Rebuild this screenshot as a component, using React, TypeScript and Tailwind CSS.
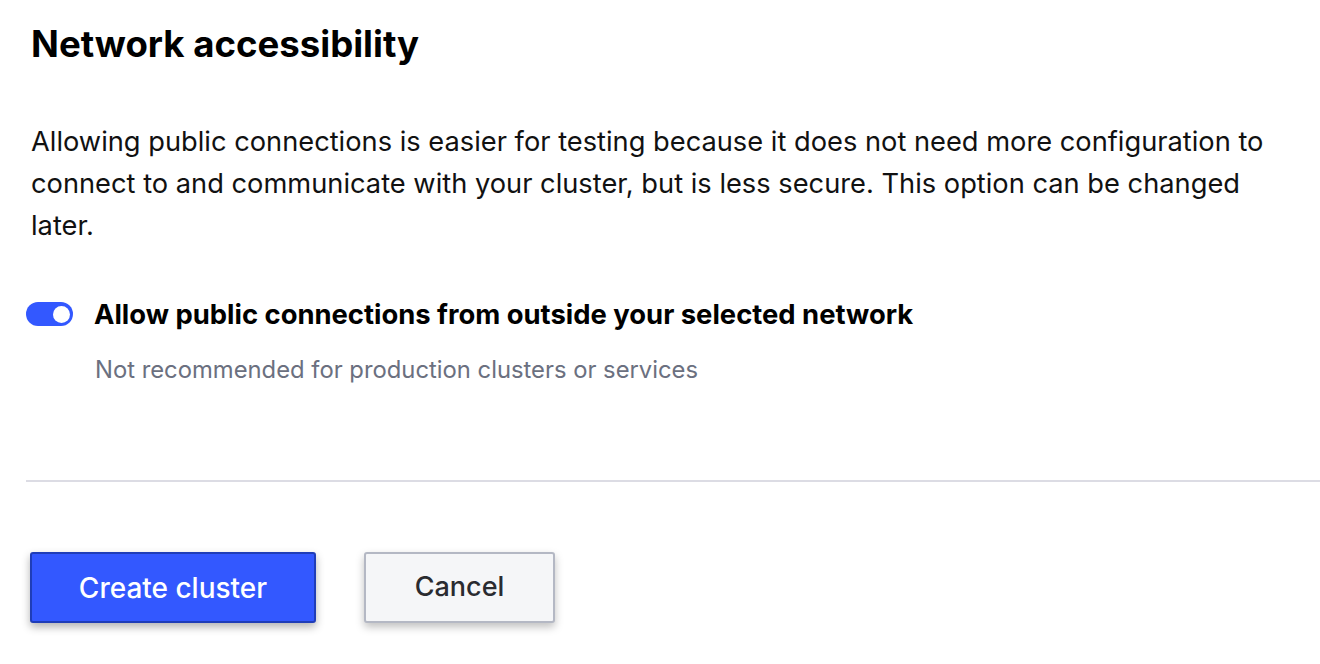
import React from "react";

export default function App() {
  return (
    <div className="w-[1320px] h-[664px] bg-white overflow-hidden" style={{ fontFamily: "Inter, 'Noto Sans', sans-serif" }}>
      <div className="pl-[31px] pt-[22px]">
        <h1 className="text-[36.6px] leading-[44px] font-bold text-black">Network accessibility</h1>
        <p className="mt-[55px] w-[1250px] text-[27.25px] leading-[42px] text-[#111]">
          Allowing public connections is easier for testing because it does not need more configuration to connect to and communicate with your cluster, but is less secure. This option can be changed later.
        </p>
      </div>
      <div className="mt-[49px] pl-[26px] flex items-center gap-[21px]">
        <div className="relative w-[47px] h-[24px] rounded-full bg-[#3358ff] shrink-0">
          <div className="absolute right-[3px] top-[3.5px] w-[17px] h-[17px] rounded-full bg-white" />
        </div>
        <span className="text-[27.4px] leading-[36px] font-bold text-black whitespace-nowrap">Allow public connections from outside your selected network</span>
      </div>
      <div className="pl-[95px] mt-[23px] text-[23.8px] leading-[30px] text-[#6b7080]">
        Not recommended for production clusters or services
      </div>
      <div className="ml-[26px] mt-[95px] h-[2px] bg-[#dcdce4]" />
      <div className="pl-[30px] mt-[70px] flex gap-[48px]">
        <button className="w-[286px] h-[71px] rounded-[3px] bg-[#3358ff] border-2 border-[#1f3db8] text-white text-[28px] font-medium shadow-[0_4px_8px_rgba(0,0,0,0.3)]">
          Create cluster
        </button>
        <button className="w-[191px] h-[71px] rounded-[3px] bg-[#f5f6f8] border-2 border-[#b4b8c4] text-[#2a2b30] text-[27px] font-medium shadow-[0_4px_8px_rgba(0,0,0,0.25)]">
          Cancel
        </button>
      </div>
    </div>
  );
}
